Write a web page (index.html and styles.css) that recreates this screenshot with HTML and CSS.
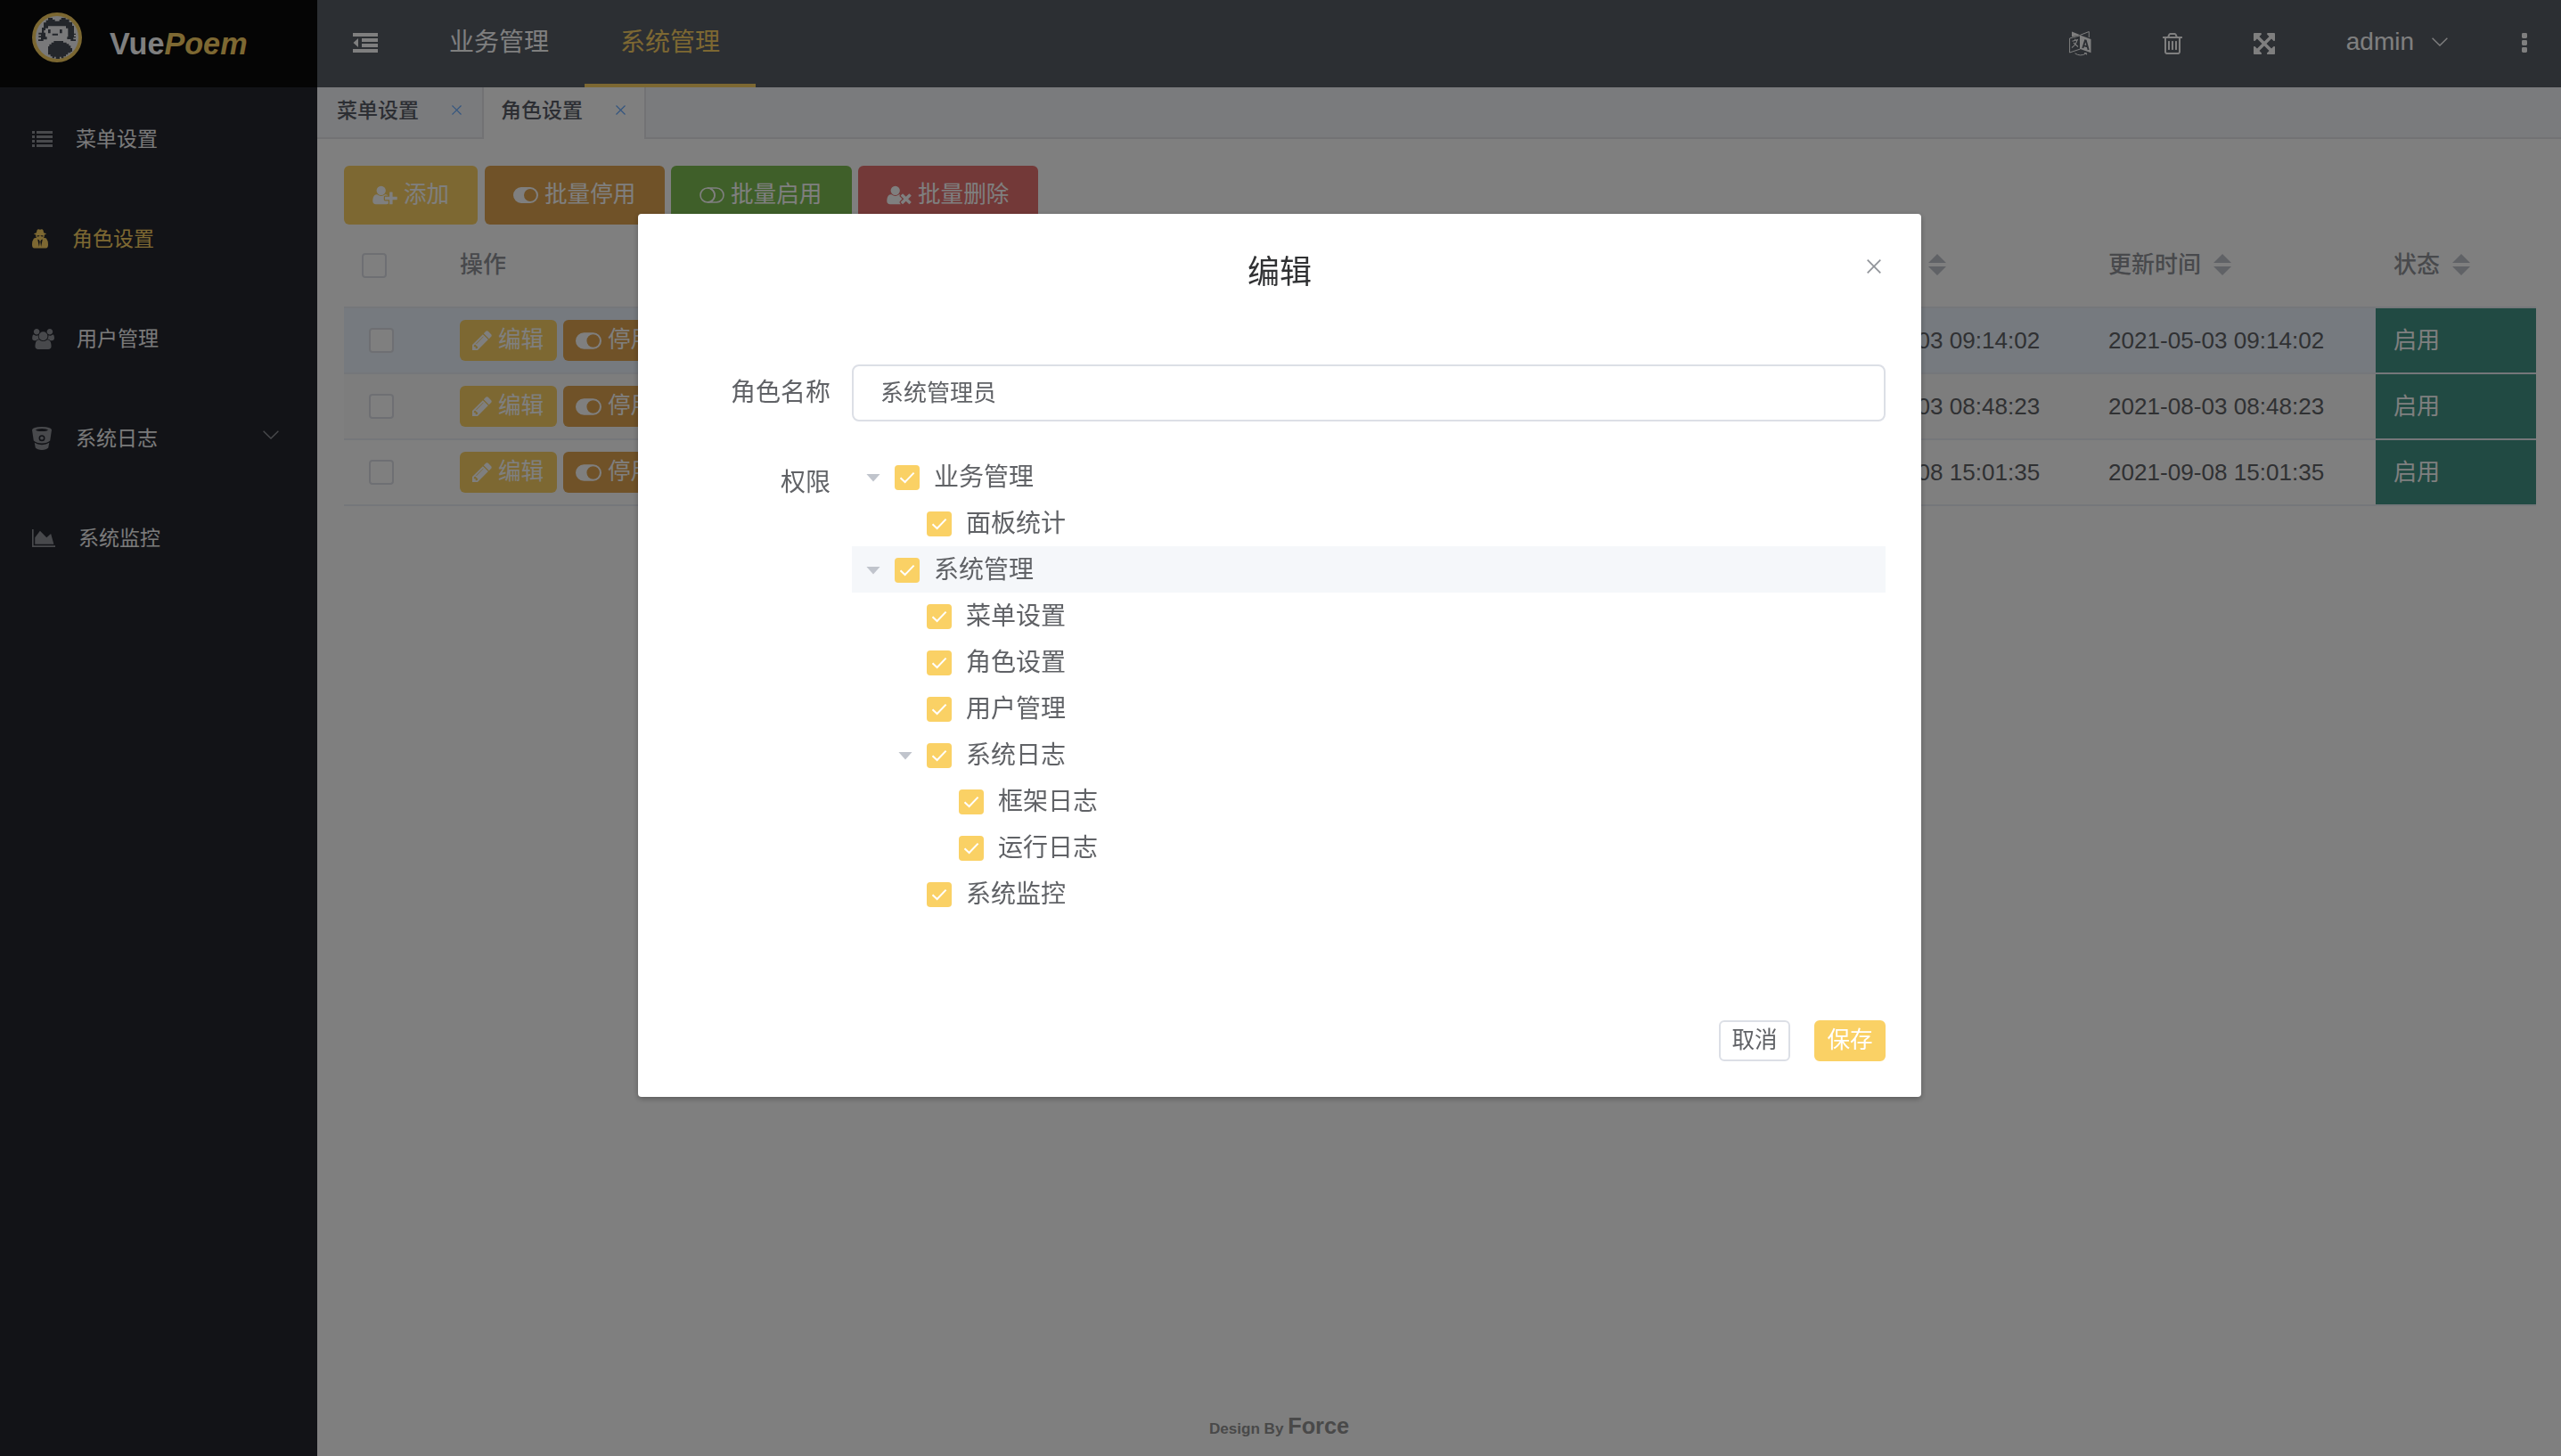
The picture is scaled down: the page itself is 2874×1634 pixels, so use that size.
FILE: index.html
```html
<!DOCTYPE html>
<html lang="zh-CN">
<head>
<meta charset="utf-8">
<title>VuePoem</title>
<link rel="stylesheet" href="styles.css">
</head>
<body>
<svg class="sprite" aria-hidden="true">
  <symbol id="i-pencil" viewBox="128 128 1536 1536"><path d="M491 1536l91-91-235-235-91 91v107h128v128h107zm523-928q0-22-22-22-10 0-17 7l-542 542q-7 7-7 17 0 22 22 22 10 0 17-7l542-542q7-7 7-17zm-54-192l416 416-832 832h-416v-416zm683 96q0 53-37 90l-166 166-416-416 166-165q36-38 90-38 53 0 91 38l235 234q37 39 37 91z"/></symbol>
  <symbol id="i-toggle-on" viewBox="0 0 28 18"><path fill-rule="evenodd" d="M9 0H19A9 9 0 0 1 19 18H9A9 9 0 0 1 9 0ZM19 2A7 7 0 1 0 19 16A7 7 0 1 0 19 2Z"/></symbol>
  <symbol id="i-toggle-off" viewBox="0 0 28 18"><g fill="none" stroke="currentColor" stroke-width="1.6"><circle cx="9" cy="9" r="8"/><path d="M9 1H19A8 8 0 0 1 19 17H9M12 1.4A8.3 8.3 0 0 1 12 16.6"/></g></symbol>
  <symbol id="i-check" viewBox="0 0 28 28"><path d="M6.5 14.2L11.6 19L21.6 8.6" fill="none" stroke="#fff" stroke-width="2"/></symbol>
  <symbol id="i-close" viewBox="0 0 16 16"><path d="M.7.7L15.3 15.3M15.3.7L.7 15.3" fill="none" stroke="currentColor" stroke-width="1.7"/></symbol>
  <symbol id="i-chevron" viewBox="0 0 18 10"><path d="M.6.7L9 9L17.4.7" fill="none" stroke="currentColor" stroke-width="1.4"/></symbol>
</svg>

<div class="app">
  <aside class="sidebar">
    <div class="brand">
      <svg class="avatar" viewBox="108 42 168 168">
        <circle cx="192" cy="126" r="78" fill="#f2f2f4" stroke="#f7cf62" stroke-width="12"/>
        <path fill="#474c56" d="M162 60H177V66H185V71H200V66H206V60H221V65H233V75H243V87H249V113H255V117H249V123H255V127H247V133H255V138H238V132H226V124H229V95H222V88H162V95H153V102H148V110H153V124H158V133H146V138H129V133H138V126H130V121H138V116H130V110H141V93H147V76H155V68H162Z"/>
        <path fill="#474c56" d="M181 138H213V143H224V148H232V154H238V162H243V174H238V178H229V184H222V190H214V196H206V191H201V198H188V191H183V196H176V190H170V184H162V156H166V149H173V143H181Z"/>
        <path fill="#474c56" d="M162 99H170V112H162ZM201 99H209V112H201ZM176 113H195V119H176Z"/>
      </svg>
      <div class="brand-name">Vue<em>Poem</em></div>
    </div>
    <nav class="menu">
      <a class="menu-item">
        <svg width="23" height="18" viewBox="0 0 23 18"><path d="M0 0h3v3H0zM5 0h18v3H5zM0 5h3v3H0zM5 5h18v3H5zM0 10h3v3H0zM5 10h18v3H5zM0 15h3v3H0zM5 15h18v3H5z"/></svg>
        <span>菜单设置</span>
      </a>
      <a class="menu-item active">
        <svg width="18" height="22" viewBox="0 0 18 22"><path fill-rule="evenodd" d="M5.6 1.2Q6.4-.3 9 .7Q11.6-.3 12.4 1.2L13.2 4.2Q16 4.8 16 5.6Q15.6 6.3 13.8 6.6V8.6L12.7 9.4L16 10.4Q18 13 18 17.5Q18 21.6 15.5 21.6H2.5Q0 21.6 0 17.5Q0 13 2 10.4L5.3 9.4L4.2 8.6V6.6Q2.4 6.3 2 5.6Q2 4.8 4.8 4.2ZM5.6 7.2V8.4Q7.8 9 8.6 7.2H9.4Q10.2 9 12.4 8.4V7.2ZM6.2 11.5L7.9 20L8.7 14L7.8 12.3ZM11.8 11.5L10.1 20L9.3 14L10.2 12.3Z"/></svg>
        <span>角色设置</span>
      </a>
      <a class="menu-item">
        <svg width="25" height="23" viewBox="64 0 1920 1792"><path d="M657 896q-162 5-265 128h-134q-82 0-138-40.5t-56-118.5q0-353 124-353 6 0 43.5 21t97.5 42.5 119 21.5q67 0 133-23-5 37-5 66 0 159 92 256zm1071 637q0 120-73 189.5t-194 69.5h-874q-121 0-194-69.5t-73-189.5q0-53 3.5-103.5t14-109 26.5-108.5 43-97.5 62-81 85.5-53.5 111.5-20q10 0 43 21.5t73 48 107 48 135 21.5 135-21.5 107-48 73-48 43-21.5q61 0 111.5 20t85.5 53.5 62 81 43 97.5 26.5 108.5 14 109 3.5 103.5zm-1024-1277q0 106-75 181t-181 75-181-75-75-181 75-181 181-75 181 75 75 181zm704 384q0 159-112.5 271.5t-271.5 112.5-271.5-112.5-112.5-271.5 112.5-271.5 271.5-112.5 271.5 112.5 112.5 271.5zm576 225q0 78-56 118.5t-138 40.5h-134q-103-123-265-128 92-97 92-256 0-29-5-66 66 23 133 23 59 0 119-21.5t97.5-42.5 43.5-21q124 0 124 353zm-128-609q0 106-75 181t-181 75-181-75-75-181 75-181 181-75 181 75 75 181z"/></svg>
        <span>用户管理</span>
      </a>
      <a class="menu-item">
        <svg width="22" height="26" viewBox="0 0 22 26"><path fill-rule="evenodd" d="M11 0Q21.5.2 22 3.6L20.2 15.6Q17 18.6 11 18.6Q5 18.6 1.8 15.6L0 3.6Q.5.2 11 0ZM11 1.9Q5.6 2 4 3.5Q5.6 5 11 5.1Q16.4 5 18 3.5Q16.4 2 11 1.9ZM11 9.2A3.5 3.5 0 1 0 11 16.2A3.5 3.5 0 1 0 11 9.2Z"/><circle cx="11" cy="12.7" r="1.9"/><path d="M2.7 17.8Q6 20.2 11 20.2Q16 20.2 19.3 17.8L18.2 23.6Q16 26 11 26Q6 26 3.8 23.6Z"/></svg>
        <span>系统日志</span>
        <svg class="menu-arrow"><use href="#i-chevron"/></svg>
      </a>
      <a class="menu-item">
        <svg width="26" height="20" viewBox="0 128 2048 1536" preserveAspectRatio="none"><path d="M2048 1536v128h-2048v-1536h128v1408h1920zm-384-1024l256 896h-1664v-576l448-576 576 576z"/></svg>
        <span>系统监控</span>
      </a>
    </nav>
  </aside>

  <div class="page">
    <header class="topbar">
      <svg class="collapse" width="28" height="22" viewBox="0 0 28 22"><path d="M0 0h28v4H0zM10 6h18v4H10zM10 12h18v4H10zM0 18h28v4H0zM6 6v10L.5 11z"/></svg>
      <nav class="topnav">
        <a>业务管理</a>
        <a class="active">系统管理</a>
      </nav>
      <div class="tools">
        <svg class="t-lang" width="25" height="28" viewBox="0 0 25 28">
          <path d="M3 .5L12.5 4.3L3 6.2ZM12.5 4.5L24.5 9V24.2L12.5 20Z"/>
          <path d="M12.5 4.3L22.3.5V7M.6 8L12.5 4.8V20L.6 24ZM6.5 24.8Q12.5 29 19 25M17 24.6H19.6V26.5" fill="none" stroke="currentColor" stroke-width="1"/>
          <path d="M3.5 11.3L10 9.5M6.5 8.6L7 10.3M9 10.2Q7.5 15.5 3 18.5M5 13L10 17.5" fill="none" stroke="currentColor" stroke-width="1.1"/>
          <path d="M15.3 19L18 10.3L18.8 10.5L21.7 21M16.3 16.2L20.5 17.3" fill="none" stroke="#585e67" stroke-width="1.9"/>
        </svg>
        <svg class="t-trash" width="22" height="24" viewBox="192 128 1408 1536"><path d="M704 736v576q0 14-9 23t-23 9h-64q-14 0-23-9t-9-23v-576q0-14 9-23t23-9h64q14 0 23 9t9 23zm256 0v576q0 14-9 23t-23 9h-64q-14 0-23-9t-9-23v-576q0-14 9-23t23-9h64q14 0 23 9t9 23zm256 0v576q0 14-9 23t-23 9h-64q-14 0-23-9t-9-23v-576q0-14 9-23t23-9h64q14 0 23 9t9 23zm128 724v-948h-896v948q0 22 7 40.5t14.5 27 10.5 8.5h832q3 0 10.5-8.5t14.5-27 7-40.5zm-672-1076h448l-48-117q-7-9-17-11h-317q-10 2-17 11zm928 32v64q0 14-9 23t-23 9h-96v948q0 83-47 143.5t-113 60.5h-832q-66 0-113-58.5t-47-141.5v-952h-96q-14 0-23-9t-9-23v-64q0-14 9-23t23-9h309l70-167q15-37 54-63t79-26h320q40 0 79 26t54 63l70 167h309q14 0 23 9t9 23z"/></svg>
        <svg class="t-full" width="24" height="24" viewBox="128 128 1536 1536"><path d="M1411 541l-355 355 355 355 144-144q29-31 70-14 39 17 39 59v448q0 26-19 45t-45 19h-448q-42 0-59-40-17-39 14-69l144-144-355-355-355 355 144 144q31 30 14 69-17 40-59 40h-448q-26 0-45-19t-19-45v-448q0-42 40-59 39-17 69 14l144 144 355-355-355-355-144 144q-19 19-45 19-12 0-24-5-40-17-40-59v-448q0-26 19-45t45-19h448q42 0 59 40 17 39-14 69l-144 144 355 355 355-355-144-144q-31-30-14-69 17-40 59-40h448q26 0 45 19t19 45v448q0 42-39 59-13 5-25 5-26 0-45-19z"/></svg>
        <span class="user">admin</span>
        <svg class="t-caret" width="18" height="10"><use href="#i-chevron"/></svg>
        <svg class="t-more" width="6" height="22" viewBox="0 0 6 22"><rect width="6" height="6" rx="1.4"/><rect y="8" width="6" height="6" rx="1.4"/><rect y="16" width="6" height="6" rx="1.4"/></svg>
      </div>
    </header>

    <div class="tabs">
      <div class="tab"><span>菜单设置</span><svg><use href="#i-close"/></svg></div>
      <div class="tab current"><span>角色设置</span><svg><use href="#i-close"/></svg></div>
      <div class="tabs-rest"></div>
    </div>

    <main class="content">
      <div class="actions">
        <button class="btn gold b-add"><svg width="28" height="24" viewBox="0 0 2048 1792"><path d="M704 896q-159 0-271.5-112.5t-112.5-271.5 112.5-271.5 271.5-112.5 271.5 112.5 112.5 271.5-112.5 271.5-271.5 112.5zm960 128h352q13 0 22.5 9.5t9.5 22.5v192q0 13-9.5 22.5t-22.5 9.5h-352v352q0 13-9.5 22.5t-22.5 9.5h-192q-13 0-22.5-9.5t-9.5-22.5v-352h-352q-13 0-22.5-9.5t-9.5-22.5v-192q0-13 9.5-22.5t22.5-9.5h352v-352q0-13 9.5-22.5t22.5-9.5h192q13 0 22.5 9.5t9.5 22.5v352zm-736 224q0 52 38 90t90 38h256v238q-68 50-171 50h-874q-121 0-194-69t-73-190q0-53 3.5-103.5t14-109 26.5-108.5 43-97.5 62-81 85.5-53.5 111.5-20q19 0 39 17 79 61 154.5 91.5t164.5 30.5 164.5-30.5 154.5-91.5q20-17 39-17 132 0 217 96h-223q-52 0-90 38t-38 90v192z"/></svg>添加</button>
        <button class="btn orange b-off"><svg width="28" height="18"><use href="#i-toggle-on"/></svg>批量停用</button>
        <button class="btn green b-on"><svg width="28" height="18"><use href="#i-toggle-off"/></svg>批量启用</button>
        <button class="btn red b-del"><svg width="28" height="24" viewBox="0 0 2048 1792"><path d="M704 896q-159 0-271.5-112.5t-112.5-271.5 112.5-271.5 271.5-112.5 271.5 112.5 112.5 271.5-112.5 271.5-271.5 112.5zm1077 320l249 249q9 9 9 23 0 13-9 22l-136 136q-9 9-22 9-14 0-23-9l-249-249-249 249q-9 9-23 9-13 0-22-9l-136-136q-9-9-9-22 0-14 9-23l249-249-249-249q-9-9-9-23 0-13 9-22l136-136q9-9 22-9 14 0 23 9l249 249 249-249q9-9 23-9 13 0 22 9l136 136q9 9 9 22 0 14-9 23zm-498 0l-181 181q-37 37-37 91 0 53 37 90l83 83q-21 3-44 3h-874q-121 0-194-69t-73-190q0-53 3.5-103.5t14-109 26.5-108.5 43-97.5 62-81 85.5-53.5 111.5-20q19 0 39 17 154 122 319 122t319-122q20-17 39-17 28 0 57 6-28 27-41 50t-13 56q0 54 37 91z"/></svg>批量删除</button>
      </div>

      <div class="table">
        <div class="tr th">
          <div class="c-check"><i class="box"></i></div>
          <div class="c-op">操作</div>
          <div class="c-time"><i class="sort"></i></div>
          <div class="c-time">更新时间<i class="sort"></i></div>
          <div class="c-status">状态<i class="sort"></i></div>
        </div>
        <div class="tr hover">
          <div class="c-check"><i class="box"></i></div>
          <div class="c-op"><button class="btn mini gold"><svg width="22" height="22"><use href="#i-pencil"/></svg>编辑</button><button class="btn mini orange"><svg width="29" height="19"><use href="#i-toggle-on"/></svg>停用</button></div>
          <div class="c-time">2021-05-03 09:14:02</div>
          <div class="c-time">2021-05-03 09:14:02</div>
          <div class="c-status">启用</div>
        </div>
        <div class="tr stripe">
          <div class="c-check"><i class="box"></i></div>
          <div class="c-op"><button class="btn mini gold"><svg width="22" height="22"><use href="#i-pencil"/></svg>编辑</button><button class="btn mini orange"><svg width="29" height="19"><use href="#i-toggle-on"/></svg>停用</button></div>
          <div class="c-time">2021-08-03 08:48:23</div>
          <div class="c-time">2021-08-03 08:48:23</div>
          <div class="c-status">启用</div>
        </div>
        <div class="tr">
          <div class="c-check"><i class="box"></i></div>
          <div class="c-op"><button class="btn mini gold"><svg width="22" height="22"><use href="#i-pencil"/></svg>编辑</button><button class="btn mini orange"><svg width="29" height="19"><use href="#i-toggle-on"/></svg>停用</button></div>
          <div class="c-time">2021-09-08 15:01:35</div>
          <div class="c-time">2021-09-08 15:01:35</div>
          <div class="c-status">启用</div>
        </div>
      </div>
    </main>
    <footer class="footer">Design By <b>Force</b></footer>
  </div>
</div>

<div class="overlay">
  <section class="dialog" role="dialog">
    <header class="dialog-head">
      <h2>编辑</h2>
      <svg class="dialog-close"><use href="#i-close"/></svg>
    </header>
    <div class="form">
      <label class="label-name">角色名称</label>
      <div class="input">系统管理员</div>
      <label class="label-perm">权限</label>
      <ul class="tree">
        <li class="node"><i class="arrow"></i><svg class="chk"><use href="#i-check"/></svg><span>业务管理</span></li>
        <li class="node l2 leaf"><i class="arrow"></i><svg class="chk"><use href="#i-check"/></svg><span>面板统计</span></li>
        <li class="node focus"><i class="arrow"></i><svg class="chk"><use href="#i-check"/></svg><span>系统管理</span></li>
        <li class="node l2 leaf"><i class="arrow"></i><svg class="chk"><use href="#i-check"/></svg><span>菜单设置</span></li>
        <li class="node l2 leaf"><i class="arrow"></i><svg class="chk"><use href="#i-check"/></svg><span>角色设置</span></li>
        <li class="node l2 leaf"><i class="arrow"></i><svg class="chk"><use href="#i-check"/></svg><span>用户管理</span></li>
        <li class="node l2"><i class="arrow"></i><svg class="chk"><use href="#i-check"/></svg><span>系统日志</span></li>
        <li class="node l3 leaf"><i class="arrow"></i><svg class="chk"><use href="#i-check"/></svg><span>框架日志</span></li>
        <li class="node l3 leaf"><i class="arrow"></i><svg class="chk"><use href="#i-check"/></svg><span>运行日志</span></li>
        <li class="node l2 leaf"><i class="arrow"></i><svg class="chk"><use href="#i-check"/></svg><span>系统监控</span></li>
      </ul>
    </div>
    <footer class="dialog-foot">
      <button class="btn plain">取消</button>
      <button class="btn plain save">保存</button>
    </footer>
  </section>
</div>
</body>
</html>
```

FILE: styles.css
```css
* { box-sizing: border-box; }

html, body { height: 100%; }

body {
  margin: 0;
  overflow: hidden;
  font-family: "Liberation Sans", "Noto Sans CJK SC", sans-serif;
  font-size: 26px;
  line-height: 1;
  color: #606266;
  background: #fff;
}

svg { display: block; flex: none; fill: currentColor; }
.sprite { position: absolute; width: 0; height: 0; }
i { font-style: normal; }

.app { display: flex; height: 100%; }

/* sidebar */
.sidebar { width: 356px; flex: none; background: #24262e; }
.brand {
  display: flex;
  align-items: flex-start;
  height: 98px;
  padding: 14px 0 0 36px;
  background: #0a0a0a;
}
.avatar { width: 56px; height: 56px; }
.brand-name {
  margin: 18px 0 0 31px;
  font-size: 34.2px;
  font-weight: 700;
  color: #fff;
}
.brand-name em { color: #fad165; }

.menu { padding-top: 2px; }
.menu-item {
  display: flex;
  align-items: center;
  gap: 26px;
  height: 112px;
  padding: 0 43px 0 36px;
  font-size: 23px;
  color: #909399;
}
.menu-item:nth-child(2), .menu-item:nth-child(4) { gap: 27px; }
.menu-item:nth-child(3) { gap: 25px; }
.menu-item span { color: #f4f4f5; }
.menu-item.active, .menu-item.active span { color: #fad165; }
.menu-arrow { width: 18px; height: 10px; margin: -8px 0 0 auto; }

/* top bar */
.page { display: flex; flex-direction: column; flex: 1; min-width: 0; }
.topbar {
  display: flex;
  height: 98px;
  flex: none;
  background: #585e67;
  color: #fff;
}
.collapse { margin: 37px 40px 0; }
.topnav { display: flex; font-size: 28px; }
.topnav a {
  width: 192px;
  height: 98px;
  line-height: 95px;
  text-align: center;
  border-bottom: 4px solid transparent;
}
.topnav a.active { color: #fad165; border-color: #fad165; }
.tools { display: flex; margin-left: auto; padding-right: 38px; }
.t-lang { margin-top: 35px; }
.t-trash { margin: 37px 0 0 80px; }
.t-full { margin: 37px 0 0 80px; }
.user { margin: 32px 0 0 80px; font-size: 28px; line-height: 30px; }
.t-caret { margin: 42px 0 0 20px; }
.t-more { margin: 37px 0 0 83px; }

/* page tabs */
.tabs { display: flex; height: 58px; flex: none; }
.tab, .tabs-rest {
  background: #f5f7fa;
  border-bottom: 2px solid #e4e5e8;
}
.tab {
  display: flex;
  width: 187px;
  padding: 13px 23px 0 22px;
  justify-content: space-between;
  border-right: 2px solid #e4e5e8;
  font-size: 23px;
  font-weight: 500;
  line-height: 26px;
  color: #585c66;
}
.tab.current {
  width: 182px;
  padding: 13px 21px 0 19px;
  background: #fff;
  border-bottom: 0;
}
.tab svg { width: 11px; height: 11px; margin-top: 7px; color: #64a9ff; }
.tabs-rest { flex: 1; }

/* buttons */
.btn {
  display: flex;
  align-items: center;
  gap: 7px;
  height: 66px;
  padding: 0 0 0 32px;
  border: 0;
  border-radius: 6px;
  font: 400 25.6px/1 "Liberation Sans", "Noto Sans CJK SC", sans-serif;
  color: #fff;
  white-space: nowrap;
}
.gold { background: #fad165; }
.orange { background: #e0a450; }
.green { background: #7ebe52; }
.red { background: #e67270; }

.content { flex: 1; padding: 30px 28px 0 30px; }
.actions { display: flex; }
.b-add { width: 150px; margin-right: 8px; }
.b-off { width: 202px; margin-right: 7px; }
.b-on { width: 203px; margin-right: 7px; }
.b-del { width: 202px; }
.mini { width: 109px; height: 46px; padding-left: 14px; }

/* table */
.tr {
  display: grid;
  grid-template-columns: 111px 1fr 319px 320px 180px;
  height: 74px;
  border-bottom: 2px solid #ebeef5;
  font-size: 26.1px;
}
.tr > div { display: flex; align-items: center; padding-left: 20px; }
.tr.hover { background: #ecf5ff; }
.tr.stripe { background: #fafafa; }
.tr.th { height: 94px; font-weight: 500; font-size: 26px; color: #909399; }
.tr.th > div { padding-bottom: 2px; }
.tr > .c-check { padding-left: 28px; }
.tr.th > .c-check { padding: 0 0 0 20px; }
.box {
  width: 28px;
  height: 28px;
  border: 2px solid #dcdfe6;
  border-radius: 4px;
  background: #fff;
}
.tr > .c-op { gap: 7px; padding-left: 19px; }
.tr:not(.th) > .c-status { background: #429486; color: #fff; }
.sort {
  width: 20px;
  height: 24px;
  margin-left: 14px;
  background: #c0c4cc;
  clip-path: polygon(50% 0, 100% 10px, 0 10px, 0 14px, 100% 14px, 50% 24px, 0 14px, 0 10px);
}
.tr.th > .c-time:nth-child(3) { padding-left: 123px; }

.footer {
  height: 46px;
  padding-right: 359px;
  text-align: center;
  font-size: 17.1px;
  font-weight: 700;
  color: #929292;
}
.footer b { font-size: 25.3px; }

/* dialog */
.overlay {
  position: fixed;
  inset: 0;
  display: flex;
  justify-content: center;
  align-items: flex-start;
  padding-top: 240px;
  background: rgba(0, 0, 0, .5);
}
.dialog {
  display: flex;
  flex-direction: column;
  width: 1440px;
  height: 991px;
  padding: 0 40px 40px;
  margin-right: 2px;
  border-radius: 4px;
  background: #fff;
  box-shadow: 0 2px 6px rgba(0, 0, 0, .3);
}
.dialog-head {
  display: grid;
  grid-template-columns: 1fr auto 1fr;
  height: 169px;
}
.dialog-head h2 {
  grid-column: 2;
  margin: 48px 0 0;
  font-size: 36px;
  font-weight: 400;
  color: #303133;
}
.dialog-close {
  width: 16px;
  height: 16px;
  margin: 51px 5px 0 0;
  justify-self: end;
  color: #909399;
}
.form {
  display: grid;
  grid-template-columns: 176px 1160px;
  grid-template-rows: 64px auto;
  gap: 36px 24px;
  font-size: 28px;
}
.form label { text-align: right; }
.label-name { padding-top: 18px; }
.label-perm { padding-top: 19px; }
.input {
  padding-left: 30px;
  border: 2px solid #dcdfe6;
  border-radius: 8px;
  font-size: 26px;
  line-height: 60px;
}
.tree { margin: 0; padding: 0; list-style: none; }
.node { display: flex; align-items: center; height: 52px; }
.node span { padding-top: 2px; }
.node.focus { background: #f5f7fa; }
.node.l2 { padding-left: 36px; }
.node.l3 { padding-left: 72px; }
.arrow {
  width: 16px;
  height: 9px;
  margin: 2px 16px 0;
  background: #c0c4cc;
  clip-path: polygon(0 0, 100% 0, 50% 100%);
}
.leaf .arrow { visibility: hidden; }
.chk {
  width: 28px;
  height: 28px;
  margin: 2px 16px 0 0;
  border-radius: 4px;
  background: #fad165;
}
.dialog-foot {
  display: flex;
  justify-content: flex-end;
  gap: 27px;
  margin-top: auto;
}
.plain {
  width: 80px;
  height: 46px;
  padding: 0;
  justify-content: center;
  border: 2px solid #dcdfe6;
  background: #fff;
  color: #606266;
}
.plain.save { border-color: #fad165; background: #fad165; color: #fff; }
```
